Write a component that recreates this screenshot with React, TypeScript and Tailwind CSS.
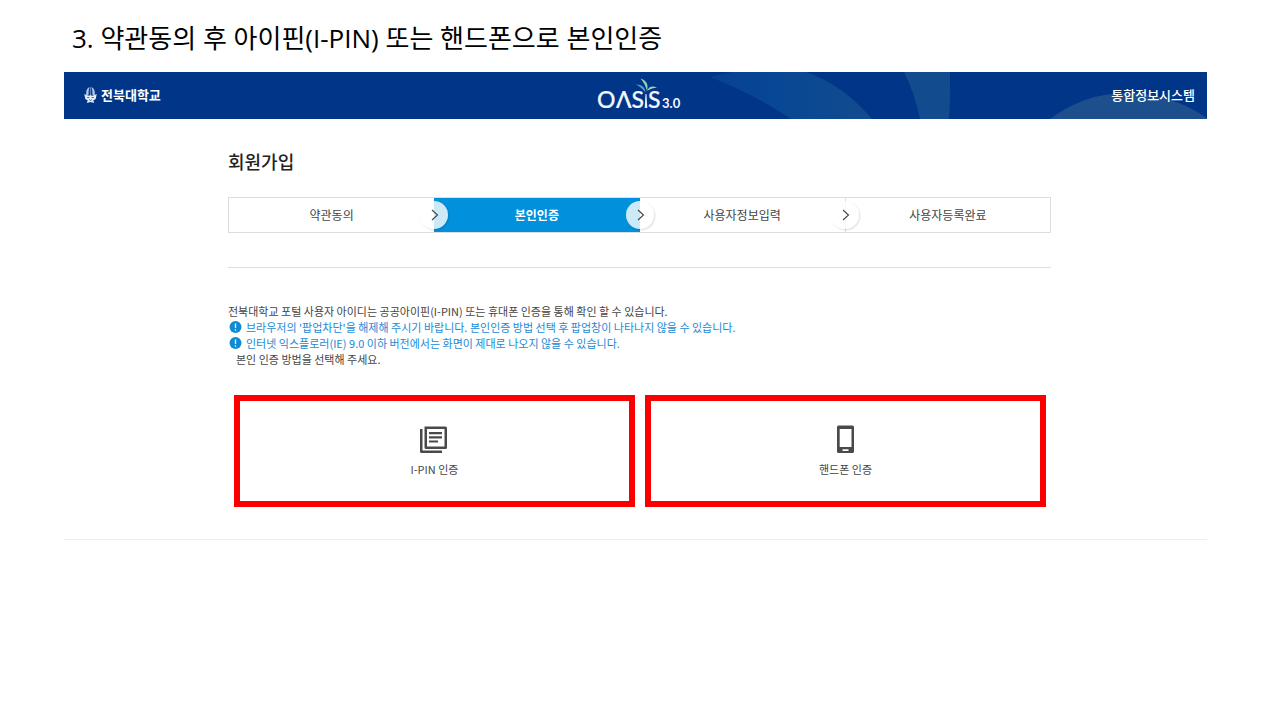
import React from 'react';

const steps = ['약관동의', '본인인증', '사용자정보입력', '사용자등록완료'];
const activeStep = 1;

function Crest() {
  return (
    <svg viewBox="0 0 13 18" className="h-[18px] w-[13px]" aria-hidden="true">
      <path d="M5.800 1C3 2 1.800 4.500 2.200 9L4.400 10L4.800 3.500ZM7.200 1C10 2 11.200 4.500 10.800 9L8.600 10L8.200 3.500Z" fill="#b4c8e6" />
      <path d="M6.500 1.500V9" stroke="#5d82bd" strokeWidth="1.300" />
      <path d="M0.300 8L4.500 10L6.500 9L8.500 10L12.700 8L11.700 13L9.200 14.500L10.300 17L6.500 16L2.700 17L3.800 14.500L1.300 13Z" fill="#e6eefa" />
      <path d="M3.200 11.500H5.300M7.700 11.500H9.800M5 13.500L6.500 14.500L8 13.500" stroke="#1a4a96" strokeWidth="0.800" fill="none" />
    </svg>
  );
}

function OasisLogo() {
  return (
    <svg viewBox="0 0 86 36" className="h-9 w-[86px]" role="img" aria-label="OASIS 3.0">
      <g fill="#f4f8ff" fontFamily="Lato, 'Open Sans', sans-serif" fontSize="23">
        <g stroke="#f4f8ff" strokeWidth="0.200">
          <text x="0" y="31">O</text>
          <text x="19" y="31">Λ</text>
          <text x="34.500" y="31">S</text>
          <text x="51" y="31">S</text>
        </g>
        <text x="65" y="31" fontSize="13" fontWeight="700">3.0</text>
      </g>
      <path d="M48.500 17L47.700 31H50.300L49.500 17Z" fill="#e4effa" />
      <path d="M43.500 1.500C49.300 3 51.800 7.500 50 14C48.800 9.500 47 5.500 43.500 1.500Z" fill="#8fd0b4" />
      <path d="M39 7.500C44.500 7.300 48 10 48.500 15.500C45.800 12 43 9.500 39 7.500Z" fill="#4fa3dc" />
      <path d="M50 14C52 9.500 55.500 8.500 60 10.800C55.800 11 52.800 12 50 14Z" fill="#a5d792" />
    </svg>
  );
}

function HeaderArt() {
  return (
    <svg
      viewBox="0 0 507 47"
      preserveAspectRatio="xMaxYMid slice"
      className="pointer-events-none absolute inset-y-0 right-0 h-full w-[507px]"
      aria-hidden="true"
    >
      <defs>
        <linearGradient id="leaf" x1="0" x2="1">
          <stop offset="0" stopColor="#064190" />
          <stop offset="0.4" stopColor="#084794" />
          <stop offset="1" stopColor="#124b8e" />
        </linearGradient>
      </defs>
      <path d="M10 5Q22 2 32 0H106Q142 12 172 47H91Q58 24 10 5Z" fill="url(#leaf)" />
      <path d="M204 0H250Q251 24 249 47H220Q215 22 204 0Z" fill="#134c8e" />
      <path d="M350 47Q385 21 426 21Q470 21 507 46V47Z" fill="#1d4f8c" />
    </svg>
  );
}

function Chevron() {
  return (
    <span className="absolute top-1/2 -right-3.5 z-10 flex size-7 -translate-y-1/2 items-center justify-center rounded-full bg-white/80 pl-0.5 shadow-[1px_1px_2px_rgba(0,0,0,0.14)]">
      <svg viewBox="0 0 8 12" className="h-3 w-2" aria-hidden="true">
        <path d="M1 1L6.500 6L1 11" fill="none" stroke="#444" strokeWidth="1.100" />
      </svg>
    </span>
  );
}

function Notice({ children }: { children: React.ReactNode }) {
  return (
    <p className="flex items-center gap-1 text-[#1a8ad6]">
      <svg viewBox="0 0 14 14" className="size-3.5 shrink-0" aria-hidden="true">
        <circle cx="7.500" cy="7" r="6" fill="#0f8bd6" />
        <path d="M7.500 3.500V7.800" stroke="#fff" strokeWidth="1.300" />
        <circle cx="7.500" cy="10" r="0.800" fill="#fff" />
      </svg>
      <span>{children}</span>
    </p>
  );
}

function MethodButton({ label, children }: { label: string; children: React.ReactNode }) {
  return (
    <button
      type="button"
      className="flex h-28 flex-1 cursor-pointer flex-col items-center justify-center gap-1.5 border-[6px] border-[#fb0000] bg-white pb-0.5 text-[11px] leading-4 text-[#444]"
    >
      <svg viewBox="0 0 32 32" className="size-8" fill="#4a4a4c" aria-hidden="true">
        {children}
      </svg>
      {label}
    </button>
  );
}

export default function App() {
  return (
    <div className="min-h-screen bg-white pr-[73px] pl-16 font-['Noto_Sans_CJK_KR',sans-serif]">
      <h1 className="flex h-[72px] items-center pt-1 pl-2 font-['Open_Sans','Noto_Sans_CJK_KR',sans-serif] text-[26px] leading-9 text-black">
        3. 약관동의 후 아이핀(I-PIN) 또는 핸드폰으로 본인인증
      </h1>

      <header className="relative grid h-[47px] grid-cols-[1fr_auto_1fr] items-center bg-[#003587] pr-3 pb-0.5 pl-5 text-[13px] leading-5 font-medium text-white">
        <HeaderArt />
        <div className="relative flex items-center gap-1">
          <Crest />
          <span className="font-bold">전북대학교</span>
        </div>
        <div className="relative">
          <OasisLogo />
        </div>
        <span className="relative text-right">통합정보시스템</span>
      </header>

      <main className="border-b border-[#eee] pr-[156px] pb-8 pl-[164px]">
        <h2 className="pt-[29px] text-lg leading-[26px] font-medium text-[#222]">회원가입</h2>

        <ol className="mt-[23px] grid h-9 grid-cols-4 border border-[#ddd] text-[12px] leading-5">
          {steps.map((step, i) => (
            <li
              key={step}
              aria-current={i === activeStep ? 'step' : undefined}
              className={
                i === activeStep
                  ? 'relative flex items-center justify-center bg-[#0090dc] font-bold text-white'
                  : i === 3
                    ? 'relative flex items-center justify-center border-l border-[#ddd] text-[#444]'
                    : 'relative flex items-center justify-center text-[#444]'
              }
            >
              {step}
              {i < steps.length - 1 && <Chevron />}
            </li>
          ))}
        </ol>

        <hr className="mt-[34px] border-[#ddd]" />

        <div className="pt-[35px] text-[11px] leading-4 text-[#444]">
          <p>전북대학교 포털 사용자 아이디는 공공아이핀(I-PIN) 또는 휴대폰 인증을 통해 확인 할 수 있습니다.</p>
          <Notice>브라우저의 '팝업차단'을 해제해 주시기 바랍니다. 본인인증 방법 선택 후 팝업창이 나타나지 않을 수 있습니다.</Notice>
          <Notice>인터넷 익스플로러(IE) 9.0 이하 버전에서는 화면이 제대로 나오지 않을 수 있습니다.</Notice>
          <p className="pl-2">본인 인증 방법을 선택해 주세요.</p>
        </div>

        <div className="mt-7 flex gap-2.5 pr-[5px] pl-1.5">
          <MethodButton label="I-PIN 인증">
            <path
              d="M1 6H3.500V27.500H23V30H2.500Q1 30 1 28.500ZM5.500 3.500H26.500Q28 3.500 28 5V24.500Q28 26 26.500 26H7Q5.500 26 5.500 24.500ZM8 6V23.500H25.500V6ZM10 9H23V11.200H10ZM10 13.200H23V15.400H10ZM10 17.400H19V19.600H10Z"
              fillRule="evenodd"
            />
          </MethodButton>
          <MethodButton label="핸드폰 인증">
            <path
              d="M9 2.500H22.500Q24 2.500 24 4V28.500Q24 30 22.500 30H8.500Q7 30 7 28.500V4Q7 2.500 8.500 2.500ZM9.700 6V24H21.500V6ZM12.500 26.200V28H18.500V26.200Z"
              fillRule="evenodd"
            />
          </MethodButton>
        </div>
      </main>
    </div>
  );
}
